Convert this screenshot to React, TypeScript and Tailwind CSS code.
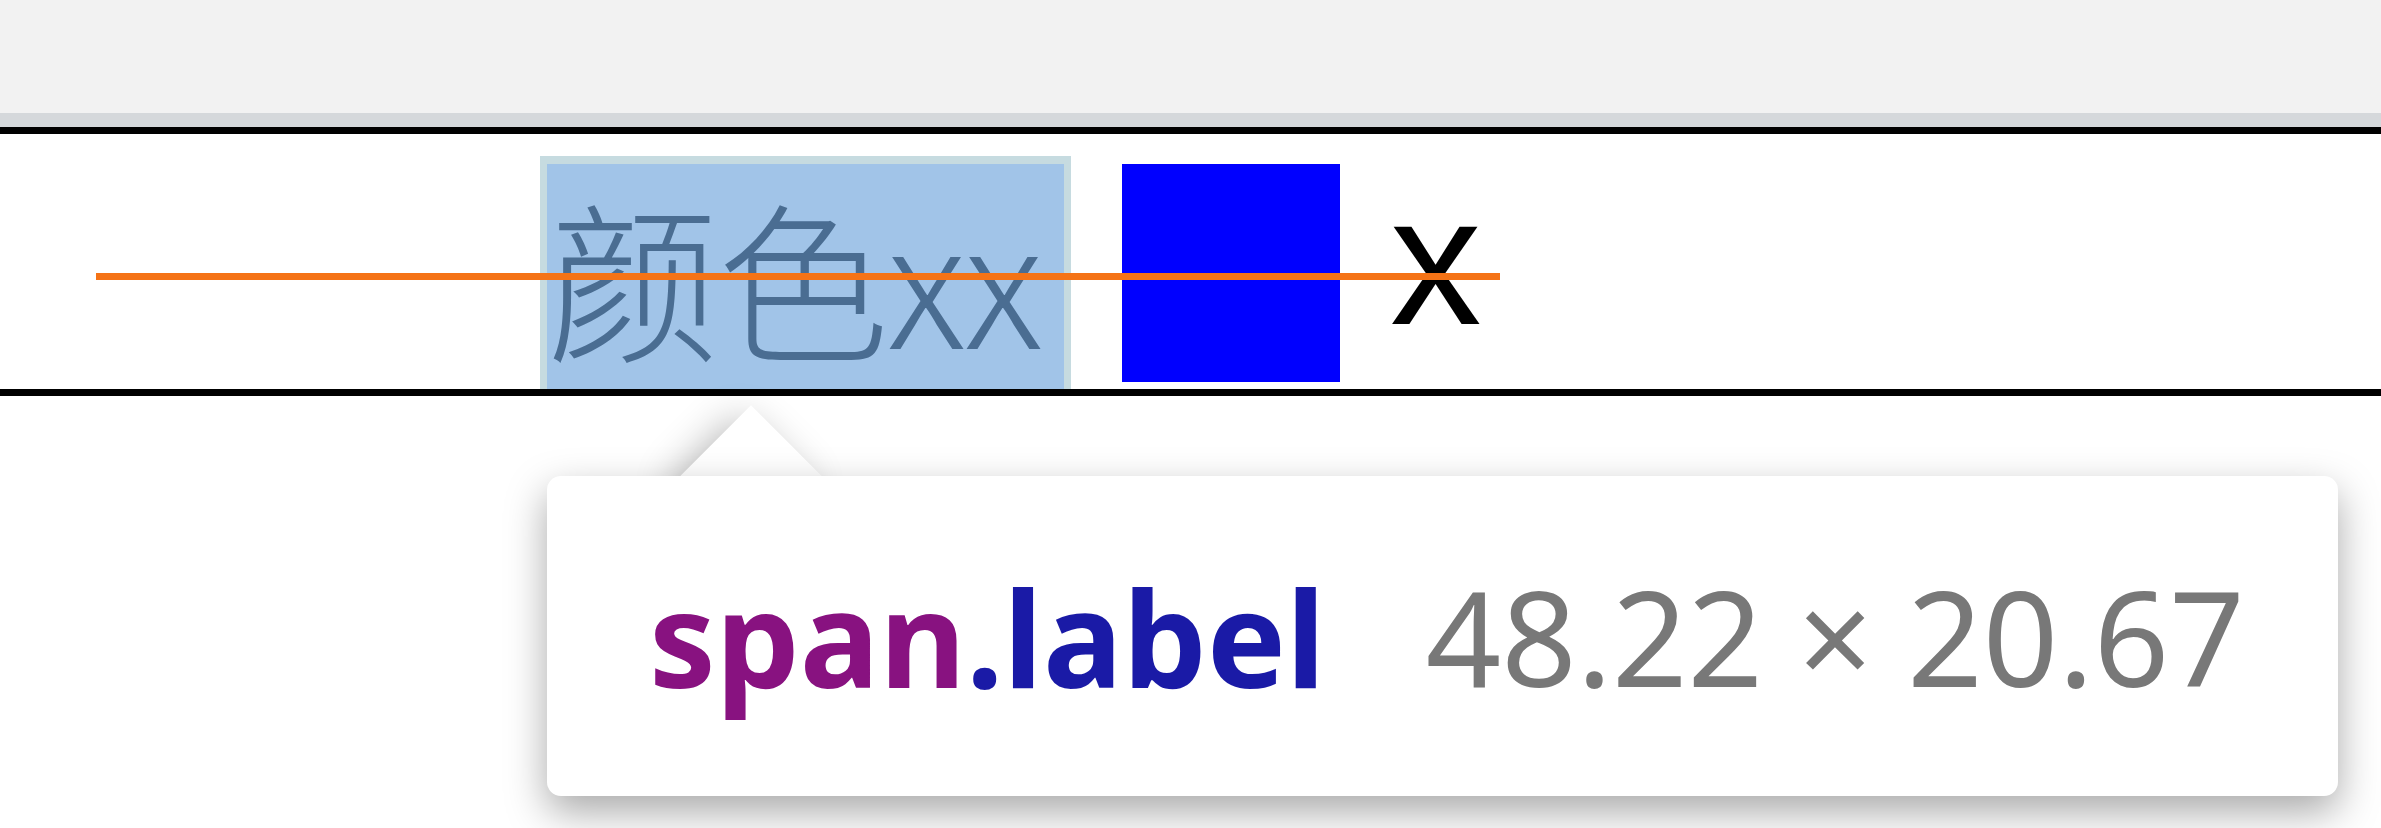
import React from 'react';

const cjk = { fontFamily: '"Noto Sans CJK SC", "Noto Sans", sans-serif' };

const App: React.FC = () => {
  return (
    <div className="relative w-[2381px] h-[828px] overflow-hidden bg-white" style={cjk}>
      {/* Toolbar strip */}
      <div className="h-[113px] bg-[#f2f2f2]" />
      <div className="h-[14px] bg-[#d5d8db]" />

      {/* Inspected row */}
      <div className="h-[269px] border-y-[7px] border-black bg-white pl-[540px] pt-[22px] flex items-start">
        {/* Highlighted label (padding + content) */}
        <div className="h-[233px] bg-[#c6dbe0] pt-[8px] px-[7px] flex">
          <div className="w-[517px] h-[225px] bg-[#a1c4e8]">
            <span className="block mt-[24px] text-[172px] leading-none tracking-[-2px] font-light text-[#4a6d92] whitespace-nowrap">
              颜色xx
            </span>
          </div>
        </div>

        {/* Colour swatch */}
        <div className="ml-[51px] mt-[8px] w-[218px] h-[218px] bg-[#0000ff]" />

        {/* Close mark */}
        <span
          className="ml-[50px] mt-[13px] text-[183px] leading-none text-black"
          style={{ fontFamily: '"Liberation Sans", Arial, sans-serif' }}
        >
          x
        </span>
      </div>

      {/* Baseline guide */}
      <div className="absolute left-[96px] top-[273px] w-[1404px] h-[7px] bg-[#f57316]" />

      {/* Element tooltip */}
      <div className="relative ml-[547px] mt-[80px] w-[1791px] h-[320px]">
        <div className="absolute left-[154px] top-[-50px] w-[100px] h-[100px] rotate-45 bg-white shadow-[0_16px_40px_rgba(0,0,0,0.32)]" />
        <div
          className="relative h-full rounded-[14px] bg-white shadow-[0_16px_40px_rgba(0,0,0,0.34)] flex items-center pl-[102px] whitespace-nowrap"
          style={{ fontFamily: '"Noto Sans", sans-serif' }}
        >
          <span className="text-[133px] font-bold leading-none">
            <span className="text-[#881280]">span</span>
            <span className="text-[#1a1aa6]">.label</span>
          </span>
          <span className="ml-[100px] text-[132px] leading-none text-[#787878]">48.22 × 20.67</span>
        </div>
      </div>
    </div>
  );
};

export default App;
